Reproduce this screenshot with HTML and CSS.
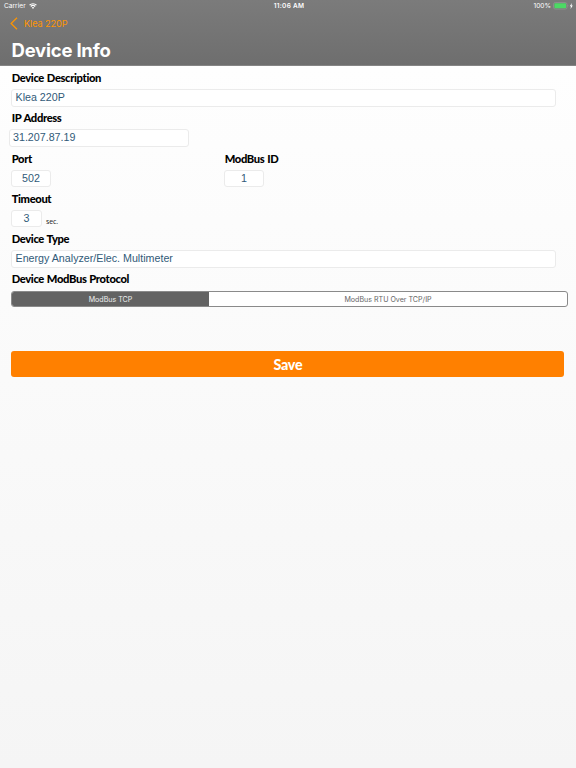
FILE: index.html
```html
<!DOCTYPE html>
<html lang="en">
<head>
<meta charset="utf-8">
<title>Device Info</title>
<link rel="stylesheet" href="styles.css">
</head>
<body>
<header class="header">
  <div class="status">
    <div class="carrier"><span class="carrier-name">Carrier</span>
      <svg class="wifi" viewBox="0 0 16 12"><path d="M8 11.8 5.5 9.1a3.6 3.6 0 0 1 5 0z" fill="#fff"/><path d="M3.6 7a6.3 6.3 0 0 1 8.8 0M1.1 4.3a10 10 0 0 1 13.8 0" fill="none" stroke="#fff" stroke-width="2.5"/></svg>
    </div>
    <div class="clock">11:06 AM</div>
    <div class="power"><span class="percent">100%</span>
      <svg class="battery" viewBox="0 0 21 8"><rect x=".5" y=".5" width="13.5" height="6.6" rx="1.7" fill="#777" stroke="#969696" stroke-width=".7"/><rect x="1.4" y="1.3" width="11.7" height="5" rx=".7" fill="#4cd964"/><path d="M14.8 2.8q1 1 0 2z" fill="#aaa"/><path d="M18.8 1 16.8 4.2H18L17.5 7l2.3-3.4h-1.3z" fill="#fff"/></svg>
    </div>
  </div>
  <div class="back"><svg class="chevron" viewBox="0 0 8 13"><path d="M7 .7 1.1 6.5 7 12.3" fill="none" stroke="#ff9500" stroke-width="1.2"/></svg><span class="back-text">Klea 220P</span></div>
  <h1 class="title">Device Info</h1>
</header>
<main class="form">
  <div class="field"><div class="label">Device Description</div><div class="input wide">Klea 220P</div></div>
  <div class="field"><div class="label">IP Address</div><div class="input ip">31.207.87.19</div></div>
  <div class="pair">
    <div class="field"><div class="label">Port</div><div class="input port">502</div></div>
    <div class="field"><div class="label">ModBus ID</div><div class="input modbus">1</div></div>
  </div>
  <div class="field"><div class="label">Timeout</div><div class="row"><div class="input timeout">3</div><span class="unit">sec.</span></div></div>
  <div class="field"><div class="label">Device Type</div><div class="input wide">Energy Analyzer/Elec. Multimeter</div></div>
  <div class="label">Device ModBus Protocol</div>
  <div class="segments"><div class="segment active">ModBus TCP</div><div class="segment">ModBus RTU Over TCP/IP</div></div>
  <div class="save">Save</div>
</main>
</body>
</html>
```

FILE: styles.css
```css
* { box-sizing: border-box; }
body {
  margin: 0;
  height: 768px;
  overflow: hidden;
  background: linear-gradient(#fefefe 66px, #f5f5f5);
  font-family: Inter, "Liberation Sans", sans-serif;
  white-space: nowrap;
}
.header {
  height: 66px;
  background: linear-gradient(#7b7b7b, #6e6e6e);
  border-bottom: 1px solid #858585;
  color: #fff;
}
.status {
  display: grid;
  grid-template-columns: 1fr auto 1fr;
  align-items: center;
  height: 12px;
  padding: 0 2px 0 4px;
  font-size: 6.6px;
  line-height: 12px;
}
.carrier { display: flex; align-items: center; gap: 3px; }
.wifi { width: 8px; height: 6px; }
.clock { font-weight: 600; font-size: 6.5px; letter-spacing: 0.25px; }
.power { display: flex; justify-content: flex-end; align-items: center; gap: 2px; }
.battery { width: 21px; height: 8px; }
.back {
  display: flex;
  align-items: center;
  gap: 6px;
  height: 24px;
  padding: 0 0 2px 10px;
  color: #ff9500;
  font-size: 9.2px;
  letter-spacing: -0.1px;
}
.chevron { width: 8px; height: 13px; }
.back-text { padding-top: 1px; }
.title {
  margin: 0 0 0 11.5px;
  font-size: 18.5px;
  line-height: 28px;
  font-weight: 700;
  letter-spacing: -0.22px;
}
.form { padding-left: 11px; }
.field { height: 40.3px; }
.label {
  height: 23px;
  padding-left: 0.7px;
  font: 900 11.2px/23px Lato, "Noto Sans", sans-serif;
  letter-spacing: -0.36px;
  word-spacing: 0.5px;
  color: #000;
}
.input {
  height: 17.6px;
  border: 1px solid #ebebeb;
  border-radius: 3px;
  background: #fff;
  color: #315a78;
  font: 10.7px/14.6px "Liberation Sans", sans-serif;
  text-align: center;
}
.wide { width: 545px; padding-left: 3.5px; text-align: left; }
.ip { width: 180px; margin-left: -2px; padding-left: 3px; text-align: left; }
.pair { display: grid; grid-template-columns: 213px 1fr; }
.port { width: 40px; }
.modbus { width: 40px; }
.row { display: flex; align-items: center; gap: 4px; }
.timeout { width: 31px; }
.unit { padding-top: 6px; font: 7px/10px "Open Sans", sans-serif; color: #222; letter-spacing: -0.1px; }
.segments {
  display: grid;
  grid-template-columns: 197px 1fr;
  width: 557px;
  height: 16.5px;
  margin-top: 0.5px;
  border: 1px solid #8a8a8a;
  border-radius: 3px;
  background: #fff;
  overflow: hidden;
}
.segment { color: #666; font-size: 7.1px; line-height: 16px; text-align: center; }
.active { background: #636363; color: #eee; }
.save {
  width: 553px;
  height: 26px;
  margin: 44px 0 0 0.4px;
  border-radius: 3px;
  background: #ff8000;
  color: #fff;
  font: 900 14.3px/27px Lato, sans-serif;
  letter-spacing: -0.3px;
  text-align: center;
}
```
